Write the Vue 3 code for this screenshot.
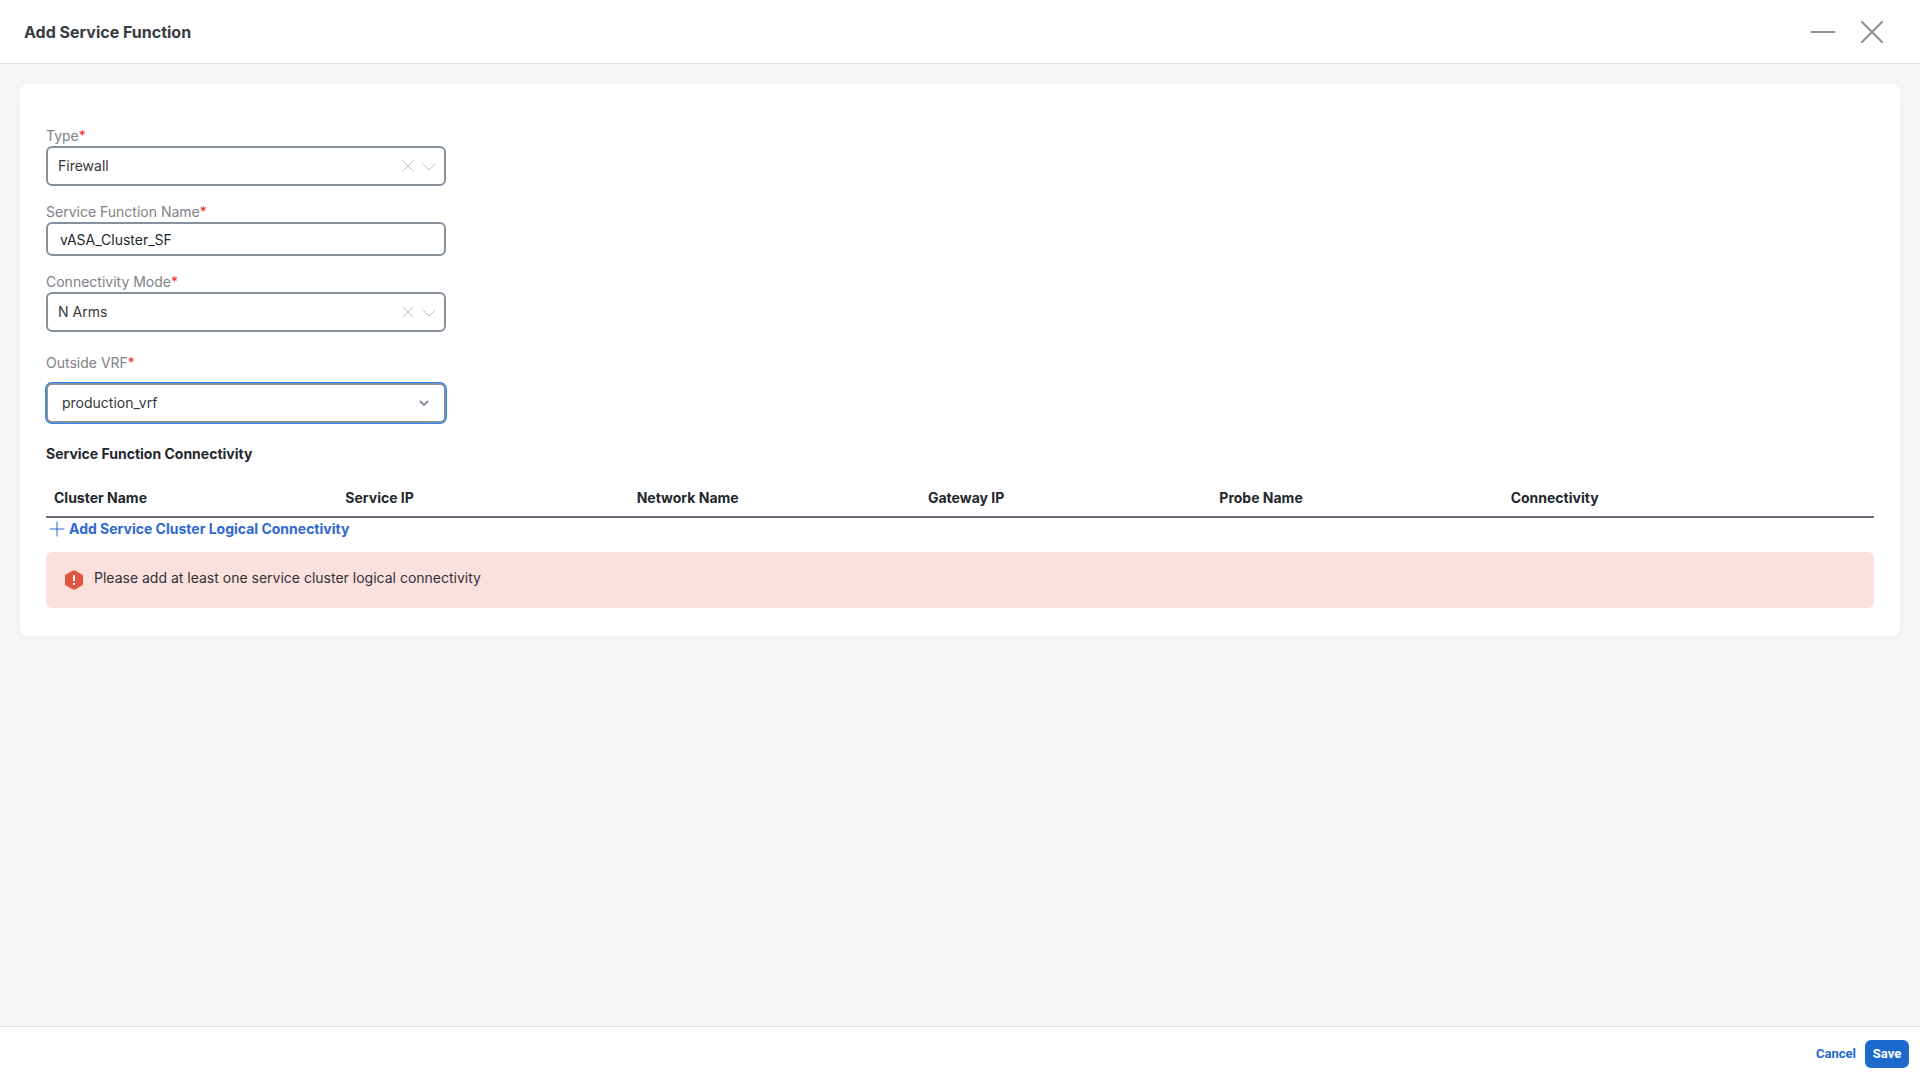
<script setup>
import { ref } from 'vue'

const type = ref('Firewall')
const name = ref('vASA_Cluster_SF')
const mode = ref('N Arms')
const vrf = ref('production_vrf')

const columns = ['Cluster Name', 'Service IP', 'Network Name', 'Gateway IP', 'Probe Name', 'Connectivity']
</script>

<template>
  <div class="dialog">
    <header class="dialog-header">
      <h1>Add Service Function</h1>
      <div class="window-actions">
        <button type="button" aria-label="Minimize">
          <svg width="26" height="26" viewBox="0 0 26 26"><path d="M1.500 13h23" /></svg>
        </button>
        <button type="button" aria-label="Close">
          <svg width="26" height="26" viewBox="0 0 26 26"><path d="M3 3l20 20M23 3L3 23" /></svg>
        </button>
      </div>
    </header>

    <main class="dialog-body">
      <form id="service-form" class="card" @submit.prevent>
        <div class="field">
          <label for="type">Type<span class="required">*</span></label>
          <div class="control">
            <select id="type" v-model="type">
              <option>Firewall</option>
            </select>
            <div class="indicators">
              <button type="button" aria-label="Clear type">
                <svg width="12" height="12" viewBox="0 0 12 12"><path d="M1 1l10 10M11 1L1 11" /></svg>
              </button>
              <svg class="arrow" width="14" height="12" viewBox="0 0 14 12"><path d="M1 4l6 6 6-6" /></svg>
            </div>
          </div>
        </div>

        <div class="field">
          <label for="name">Service Function Name<span class="required">*</span></label>
          <input id="name" v-model="name" type="text" />
        </div>

        <div class="field">
          <label for="mode">Connectivity Mode<span class="required">*</span></label>
          <div class="control">
            <select id="mode" v-model="mode">
              <option>N Arms</option>
            </select>
            <div class="indicators">
              <button type="button" aria-label="Clear connectivity mode">
                <svg width="12" height="12" viewBox="0 0 12 12"><path d="M1 1l10 10M11 1L1 11" /></svg>
              </button>
              <svg class="arrow" width="14" height="12" viewBox="0 0 14 12"><path d="M1 4l6 6 6-6" /></svg>
            </div>
          </div>
        </div>

        <div class="field field-vrf">
          <label for="vrf">Outside VRF<span class="required">*</span></label>
          <div class="control">
            <select id="vrf" v-model="vrf" class="active">
              <option>production_vrf</option>
            </select>
            <svg class="chevron" width="10" height="8" viewBox="0 0 10 8"><path d="M1.500 2.500L5 6l3.500-3.500" /></svg>
          </div>
        </div>

        <h2>Service Function Connectivity</h2>
        <table>
          <thead>
            <tr>
              <th v-for="column in columns" :key="column" scope="col">{{ column }}</th>
              <td class="actions-col"></td>
            </tr>
          </thead>
        </table>
        <button type="button" class="add">
          <svg width="16" height="16" viewBox="0 0 16 16"><path d="M8 1v14M1 8h14" /></svg>
          Add Service Cluster Logical Connectivity
        </button>

        <div class="alert" role="alert">
          <svg width="20" height="20" viewBox="0 0 20 20">
            <path class="hex" d="M9 .5q1-.6 2 0l7.200 4.100q.8.500.8 1.400v8q0 .9-.8 1.400L11 19.500q-1 .6-2 0l-7.200-4.100Q1 14.900 1 14V6q0-.9.8-1.400z" />
            <path class="mark" d="M10 5v6M10 13v2" />
          </svg>
          <p>Please add at least one service cluster logical connectivity</p>
        </div>
      </form>
    </main>

    <footer class="dialog-footer">
      <button type="button" class="cancel">Cancel</button>
      <button type="submit" form="service-form" class="save">Save</button>
    </footer>
  </div>
</template>

<style>
body {
  margin: 0;
}
</style>

<style scoped>
.dialog,
.dialog * {
  box-sizing: border-box;
}

.dialog {
  display: flex;
  flex-direction: column;
  min-height: 100vh;
  background: #f6f6f6;
  color: #23282e;
  font-family: Inter, "Liberation Sans", sans-serif;
  font-size: 14px;
  line-height: 20px;
}

button,
input,
select {
  font: inherit;
}

button {
  padding: 0;
  border: 0;
  background: none;
  color: inherit;
  cursor: pointer;
}

svg {
  display: block;
  fill: none;
  stroke: currentColor;
  stroke-linecap: round;
}

.dialog-header {
  display: flex;
  align-items: center;
  justify-content: space-between;
  height: 64px;
  padding: 0 35px 0 24px;
  border-bottom: 1px solid #dedede;
  background: #fff;
}

h1 {
  margin: 0;
  color: #373c42;
  font-size: 16px;
  font-weight: 700;
  line-height: 24px;
}

.window-actions {
  display: flex;
  gap: 23px;
  color: #8e8e8e;
}

.window-actions svg {
  stroke-width: 2;
}

.dialog-body {
  flex: 1;
  padding: 20px;
}

.card {
  padding: 42px 26px 28px;
  border-radius: 8px;
  background: #fff;
  box-shadow: 0 2px 8px rgba(0, 0, 0, 0.04);
}

.field {
  display: flex;
  flex-direction: column;
  width: 400px;
  margin-bottom: 16px;
}

.field label {
  color: #808287;
}

.required {
  color: #ee2a24;
}

.control {
  position: relative;
}

.field select,
.field input {
  display: block;
  width: 100%;
  border: 2px solid #87919c;
  border-radius: 6px;
  outline: 0;
  background: #fff;
  appearance: none;
}

.field select {
  height: 40px;
  padding: 0 48px 0 10px;
  color: #36383a;
}

.field input {
  height: 34px;
  padding: 0 12px;
  color: #23282e;
}

.indicators {
  position: absolute;
  top: 14px;
  right: 10px;
  display: flex;
  align-items: center;
  gap: 8px;
  color: #c0c0c0;
}

.arrow {
  pointer-events: none;
}

.field-vrf {
  gap: 10px;
  margin-top: 21px;
  margin-bottom: 21px;
}

.field select.active {
  padding-left: 14px;
  box-shadow: 0 0 0 1px #2c85ff;
}

.chevron {
  position: absolute;
  top: 16px;
  right: 17px;
  color: #87919c;
  stroke-width: 2;
  pointer-events: none;
}

h2 {
  margin: 0 0 16px;
  font-size: 14px;
  font-weight: 700;
  line-height: 20px;
}

table {
  width: 100%;
  border-collapse: collapse;
  table-layout: fixed;
}

th {
  height: 37px;
  padding: 0 8px;
  border-bottom: 2px solid #696b79;
  font-weight: 700;
  text-align: left;
}

.actions-col {
  width: 80px;
  padding: 0;
  border-bottom: 2px solid #696b79;
}

.add {
  display: flex;
  align-items: center;
  gap: 4px;
  height: 22px;
  padding-left: 3px;
  color: #2f68d0;
  font-weight: 700;
}

.alert {
  display: flex;
  gap: 10px;
  height: 56px;
  margin-top: 12px;
  padding: 16px 18px;
  border-radius: 6px;
  background: #fce0dd;
  color: #2f3338;
}

.alert svg {
  margin-top: 2px;
}

.alert p {
  margin: 0;
}

.hex {
  fill: #e2553f;
  stroke: none;
}

.mark {
  stroke: #fff;
  stroke-width: 2;
  stroke-linecap: butt;
}

.dialog-footer {
  display: flex;
  align-items: center;
  justify-content: flex-end;
  gap: 9px;
  height: 54px;
  padding-right: 11px;
  border-top: 1px solid #dde1e7;
  background: #fff;
  font-family: Roboto, "Liberation Sans", sans-serif;
  font-size: 13px;
  font-weight: 700;
}

.cancel {
  color: #1d69cc;
}

.save {
  width: 44px;
  height: 28px;
  border-radius: 6px;
  background: #1d69cc;
  color: #fff;
}
</style>
